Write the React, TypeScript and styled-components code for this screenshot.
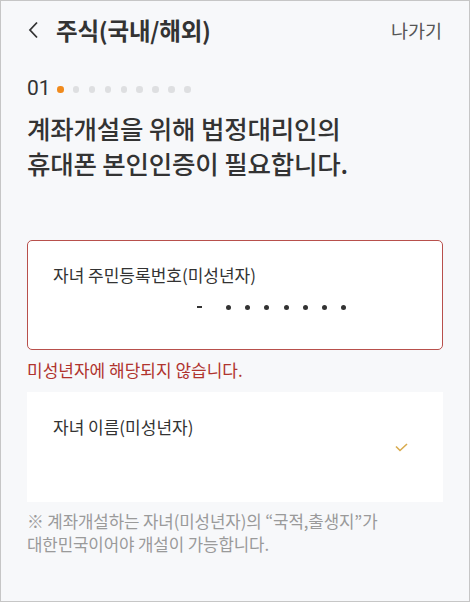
import styled, { createGlobalStyle } from 'styled-components'

const GlobalStyle = createGlobalStyle`
	* {
		box-sizing: border-box;
	}
	html, body {
		margin: 0;
		padding: 0;
		background: #f7f8fa;
	}
	body {
		font-family: 'Noto Sans CJK KR', 'Noto Sans', sans-serif;
		color: #333333;
	}
`

const Screen = styled.div`
	width: 470px;
	height: 602px;
	border: 1px solid #c6c6c6;
	background: #f7f8fa;
	display: flex;
	flex-direction: column;
	overflow: hidden;
`

const Header = styled.header`
	height: 58px;
	padding: 0 27px 0 26px;
	display: flex;
	align-items: center;
`

const BackButton = styled.button`
	width: 14px;
	height: 20px;
	padding: 0;
	border: none;
	background: none;
	display: flex;
	align-items: center;
	color: #333333;
`

const Title = styled.h1`
	margin: 0 0 0 15px;
	font-size: 23.5px;
	font-weight: 700;
	color: #333333;
	letter-spacing: -0.2px;
	flex: 1;
`

const ExitButton = styled.button`
	padding: 0;
	border: none;
	background: none;
	font-family: inherit;
	font-size: 18.5px;
	color: #555555;
`

const Content = styled.main`
	padding: 0 26px 0 26px;
	display: flex;
	flex-direction: column;
`

const StepRow = styled.div`
	margin-top: 16px;
	display: flex;
	align-items: center;
	gap: 9.4px;
	height: 26px;
`

const StepNumber = styled.span`
	font-size: 21px;
	color: #333333;
	margin-right: -3px;
	font-family: 'Roboto', 'Noto Sans', sans-serif;
`

const Dot = styled.span<{ active?: boolean }>`
	width: 6.5px;
	height: 6.5px;
	border-radius: 50%;
	background: ${(props) => (props.active ? '#f08a1c' : '#dedfe1')};
	margin-top: 3px;
`

const Heading = styled.h2`
	margin: 9px 0 0;
	font-size: 25.5px;
	line-height: 35px;
	font-weight: 500;
	color: #333333;
	letter-spacing: -0.2px;
`

const FieldBox = styled.div<{ isError?: boolean }>`
	height: 110px;
	padding: 23px 24px 0 25px;
	background: #ffffff;
	border: 1.5px solid ${(props) => (props.isError ? '#b8504c' : 'transparent')};
	border-radius: 5px;
	position: relative;
`

const FieldLabel = styled.div`
	font-size: 17px;
	color: #333333;
	line-height: 22px;
`

const MaskedValue = styled.div`
	margin-top: 15px;
	display: flex;
	align-items: center;
	padding-left: 144px;
	height: 12px;
`

const Dash = styled.span`
	width: 5px;
	height: 2px;
	background: #333333;
	margin-right: 24px;
`

const MaskDot = styled.span`
	width: 5px;
	height: 5px;
	border-radius: 50%;
	background: #333333;
	margin-right: 14.2px;
`

const ErrorText = styled.p`
	margin: 9px 0 0;
	font-size: 17px;
	line-height: 22px;
	color: #b0342e;
`

const NameBox = styled(FieldBox)`
	margin-top: 11px;
	border-radius: 0;
	border-color: transparent;
`

const CheckMark = styled.span`
	position: absolute;
	right: 34px;
	top: 50px;
	display: flex;
	color: #d9ab4e;
`

const Note = styled.p`
	margin: 8px 0 0;
	font-size: 16.8px;
	line-height: 23px;
	color: #9a9a9a;
	letter-spacing: -0.1px;
`

const steps = Array.from({ length: 9 }, (_, i) => i)
const maskDots = Array.from({ length: 7 }, (_, i) => i)

export default function App() {
	return (
		<>
			<GlobalStyle />
			<Screen>
				<Header>
					<BackButton aria-label="뒤로">
						<svg width="12" height="18" viewBox="0 0 12 18" fill="none">
							<path d="M10 1.5 L3 9 L10 16.5" stroke="#333" strokeWidth="1.8" />
						</svg>
					</BackButton>
					<Title>주식(국내/해외)</Title>
					<ExitButton>나가기</ExitButton>
				</Header>
				<Content>
					<StepRow>
						<StepNumber>01</StepNumber>
						{steps.map((i) => (
							<Dot key={i} active={i === 0} />
						))}
					</StepRow>
					<Heading>
						계좌개설을 위해 법정대리인의
						<br />
						휴대폰 본인인증이 필요합니다.
					</Heading>
					<FieldBox isError style={{ marginTop: 60 }}>
						<FieldLabel>자녀 주민등록번호(미성년자)</FieldLabel>
						<MaskedValue>
							<Dash />
							{maskDots.map((i) => (
								<MaskDot key={i} />
							))}
						</MaskedValue>
					</FieldBox>
					<ErrorText>미성년자에 해당되지 않습니다.</ErrorText>
					<NameBox>
						<FieldLabel>자녀 이름(미성년자)</FieldLabel>
						<CheckMark>
							<svg width="13" height="9" viewBox="0 0 13 9" fill="none">
								<path d="M1 3.5 L5 7.5 L12 1" stroke="currentColor" strokeWidth="1.6" />
							</svg>
						</CheckMark>
					</NameBox>
					<Note>
						※ 계좌개설하는 자녀(미성년자)의 “국적,출생지”가
						<br />
						대한민국이어야 개설이 가능합니다.
					</Note>
				</Content>
			</Screen>
		</>
	)
}
